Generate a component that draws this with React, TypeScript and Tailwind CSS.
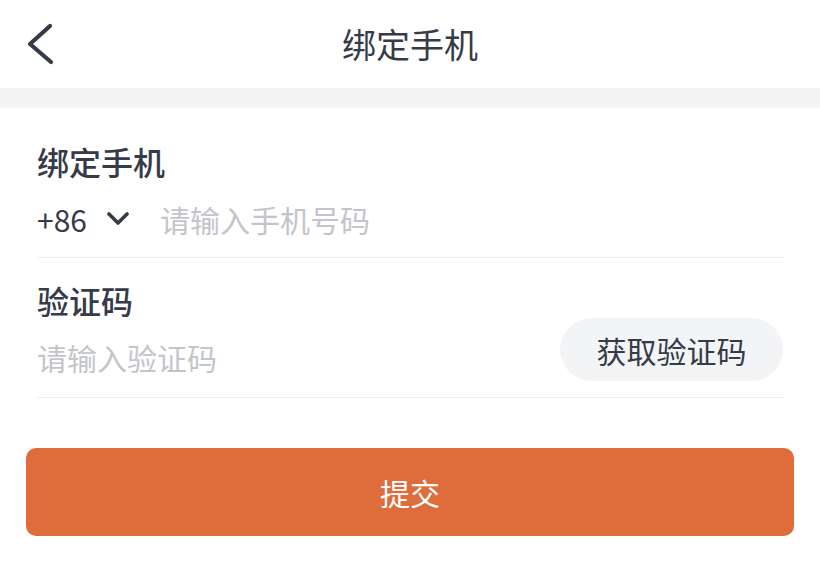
export default function App() {
  return (
    <div
      className="w-[820px] h-[562px] bg-white text-[#353b48] overflow-hidden"
      style={{ fontFamily: '"Noto Sans CJK SC", "Noto Sans", sans-serif' }}
    >
      {/* Header */}
      <header className="relative h-[88px] flex items-center justify-center">
        <button className="absolute left-[22px] top-[20px] w-[36px] h-[48px] flex items-center justify-center">
          <svg width="36" height="48" viewBox="0 0 36 48" fill="none">
            <polyline
              points="28,6 8,24 29,42"
              stroke="#353b48"
              strokeWidth="4.2"
              strokeLinecap="round"
              strokeLinejoin="round"
            />
          </svg>
        </button>
        <h1 className="text-[34px] leading-none">绑定手机</h1>
      </header>

      <div className="h-[20px] bg-[#f3f4f6]"></div>

      {/* Form */}
      <div className="px-[37px]">
        <div className="pt-[33px] border-b border-[#ededed]">
          <p className="text-[32px] leading-[40px] font-medium">绑定手机</p>
          <div className="h-[76px] flex items-center">
            <span className="text-[30px] leading-none">+86</span>
            <svg className="ml-[19px]" width="24" height="14" viewBox="0 0 24 14" fill="none">
              <polyline
                points="3,2 12,11 21,2"
                stroke="#353b48"
                strokeWidth="3.6"
                strokeLinecap="round"
                strokeLinejoin="round"
              />
            </svg>
            <span className="ml-[30px] text-[30px] leading-none text-[#c3c5cb]">请输入手机号码</span>
          </div>
        </div>

        <div className="pt-[22px] pb-[16px] flex items-end justify-between border-b border-[#ededed]">
          <div className="pb-[4px]">
            <p className="text-[32px] leading-[40px] font-medium">验证码</p>
            <p className="mt-[17px] text-[30px] leading-[40px] text-[#c3c5cb]">请输入验证码</p>
          </div>
          <button className="w-[223px] h-[63px] rounded-full bg-[#f3f4f6] text-[30px] leading-none text-[#353b48]">
            获取验证码
          </button>
        </div>
      </div>

      <div className="px-[26px] pt-[50px]">
        <button className="w-full h-[88px] rounded-[10px] bg-[#df6d3c] text-white text-[30px] leading-none">
          提交
        </button>
      </div>
    </div>
  );
}
